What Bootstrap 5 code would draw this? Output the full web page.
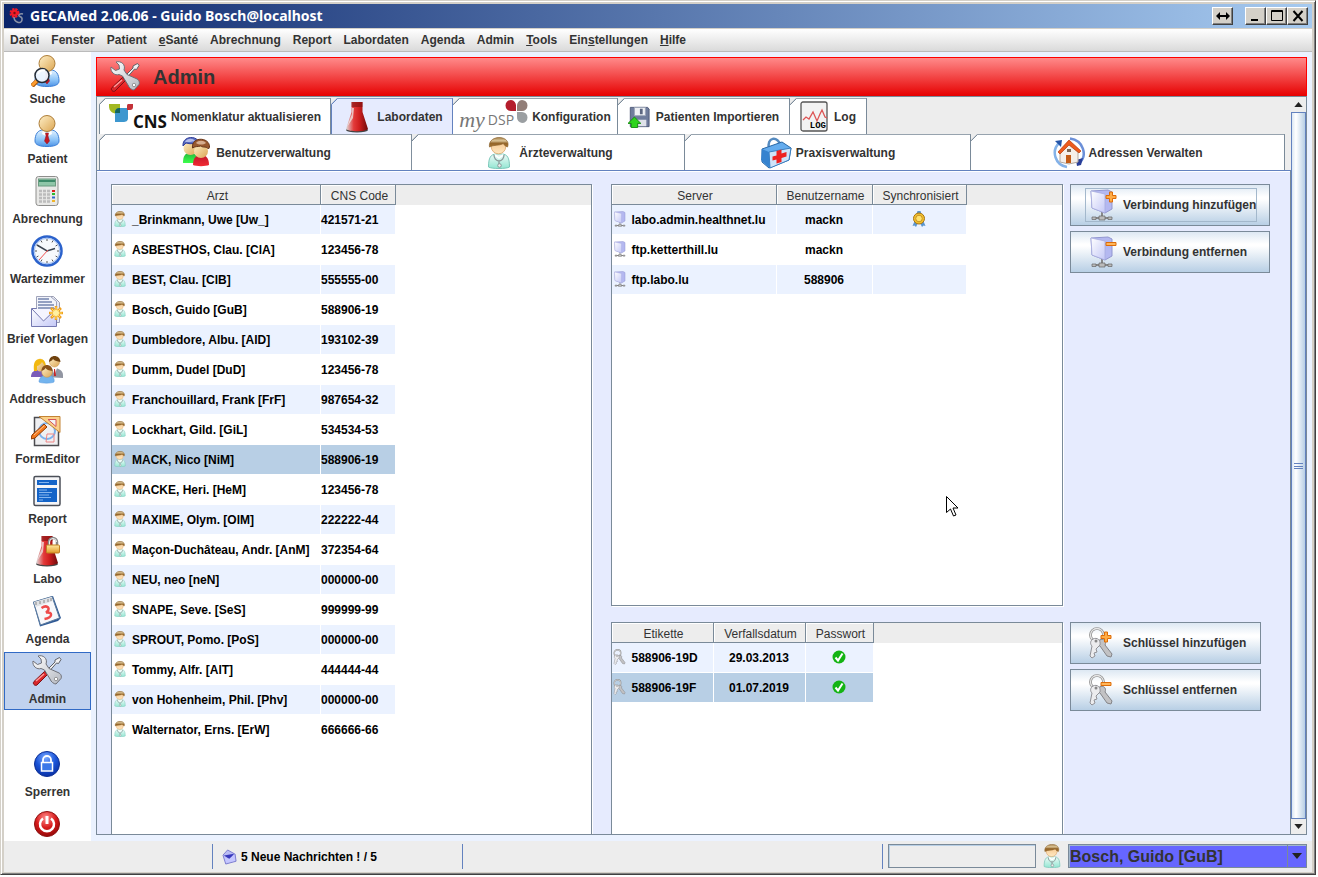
<!DOCTYPE html>
<html lang="de">
<head>
<meta charset="utf-8">
<meta name="viewport" content="width=device-width, initial-scale=1">
<title>GECAMed 2.06.06 - Guido Bosch@localhost</title>
<link href="https://cdn.jsdelivr.net/npm/bootstrap@5.3.0/dist/css/bootstrap.min.css" rel="stylesheet">
<style>
:root { --line:#7a8a99; --blue:#6382bf; --pane:#e6ebfe; --chrome:#d4d0c8; --face:#ededed; --stripe:#ebf2ff; --pick:#b8cfe5; }
body { font-family:"Liberation Sans",Arial,sans-serif; font-size:12px; font-weight:700; line-height:16px; color:#333; background:#fff; }
.btn { font-size:12px; line-height:16px; --bs-btn-font-weight:700; }

/* window frame, title bar, menu */
.window { height:calc(100vh - 2px); margin-right:2px; padding:3px 3px 2px; background:var(--chrome); border:1px solid; border-color:var(--chrome) #404040 #404040 var(--chrome); box-shadow:inset 1px 1px #fff, inset -1px -1px #808080; }
.titlebar { height:24px; padding:0 4px 0 5px; color:#fff; background:linear-gradient(90deg,#0a246a,#a6caf0); font:700 14px/24px "Noto Sans",sans-serif; }
.capbtn { width:21px; height:18px; padding:0; border:1px solid; border-color:#fff #404040 #404040 #fff; border-radius:0; background:var(--chrome); line-height:0; box-shadow:inset -1px -1px #808080; }
.capbtn svg { width:16px; height:14px; }
.menubar { height:24px; margin-top:1px; padding:0 6px; gap:12px; background:linear-gradient(#fff,#dadada); border-bottom:1px solid #bbb; }
.menubar a, .side a { color:#333; text-decoration:none; }

/* module bar on the left */
.workspace { background:var(--stripe); }
.side { width:87px; background:#fff; flex:none; }
.side a { height:58px; margin-bottom:2px; padding-top:2px; border:1px solid transparent; flex:none; text-align:center; white-space:nowrap; }
.side a.active { background:#c1d2ee; border-color:#316ac5; }
.side svg { width:32px; height:32px; display:block; margin:0 0 4px 26px; }
.spacer { height:33px; flex:none; }

/* module area */
.content-frame { margin:5px 5px 6px; }
.banner { height:39px; padding-left:12px; gap:12px; border:solid red; border-width:1px 1px 0; background:linear-gradient(#ff8a8a,#e60000); }
.banner h1 { font-size:20px; line-height:24px; font-weight:700; margin:0; }
.banner svg { width:32px; height:32px; }
.scroller { border:1px solid var(--line); background:var(--face); }
.tabrow { padding:1px 0 0 2px; }
.tabrow.second { padding:0 6px 0 2px; }
.tab-btn { height:36px; padding:0; gap:4px; color:#333; border:1px solid var(--line); border-bottom:0; border-left-width:0; background:linear-gradient(135deg,var(--line) 5px,#fff 5px) border-box; clip-path:polygon(6px 0,100% 0,100% 100%,0 100%,0 6px); white-space:nowrap; }
.tab-btn:first-child { border-left-width:1px; }
.tab-btn.chosen { border-color:var(--blue); background:linear-gradient(135deg,var(--blue) 5px,var(--pane) 5px) border-box; border-left-width:1px; }
.w-a { width:232px; } .w-b { width:122px; } .w-c { width:165px; } .w-d { width:172px; gap:6px; } .w-e { width:77px; gap:6px; }
.g-a { flex:312 1 0; } .g-b { flex:273 1 0; } .g-c { flex:286 1 0; } .g-d { flex:314 1 0; }
.i32 { width:32px; height:32px; flex:none; }
.brand-cns { height:26px; }
.cnsword { font:700 17px/20px "Open Sans",sans-serif; color:#111; margin-top:8px; }
.brand-dsp { height:34px; }
.brand-dsp svg { margin-left:-9px; }
.myword { font:italic 400 22px/22px "Liberation Serif",serif; color:#777; margin:9px 3px 0 0; }
.dspword { font:400 14px/18px "Open Sans",sans-serif; color:#777; margin-top:11px; }
.logword { position:absolute; right:2px; bottom:1px; font:700 9px/9px "Liberation Mono",monospace; color:#000; }

/* tab content: doctors left, connections and keys right */
.tabpane { border-top:1px solid var(--blue); border-right:1px solid var(--line); box-shadow:inset 0 1px #fff; background:var(--pane); display:grid; grid-template-columns:480fr 471fr 207px; grid-template-rows:minmax(0,422fr) minmax(0,212fr); row-gap:16px; padding:13px 20px 0 14px; min-height:0; }
.listing { border:1px solid var(--line); background:linear-gradient(var(--face) 20px,#fff 20px); overflow:hidden; min-height:0; min-width:0; margin-left:19px; box-shadow:1px 1px #fff; }
.listing.doctors { grid-row:span 2; margin-left:0; }
.listing.cut { border-bottom:0; }
.grid-table { border-collapse:separate; border-spacing:0; table-layout:fixed; color:#000; white-space:nowrap; }
.grid-table th { height:20px; padding:2px 0 0 3px; font-weight:400; text-align:center; line-height:16px; color:#333; background:var(--face); border:solid var(--line); border-width:0 1px 1px 0; box-shadow:inset 1px 1px #fff; }
.grid-table td { height:30px; padding:0; border:solid #fff; border-width:0 1px 1px 0; vertical-align:middle; }
.grid-table td svg { width:16px; height:16px; vertical-align:-3px; margin-right:4px; }
.grid-table td.text-center svg { margin:0; }
.grid-table tbody tr:nth-child(odd) td { background:var(--stripe); }
.grid-table tbody tr.picked td { background:var(--pick); }
.docs { width:284px; } .servers { width:355px; } .keyring { width:262px; }
.k209 { width:209px; } .k75 { width:75px; } .k165 { width:165px; } .k96 { width:96px; } .k94 { width:94px; } .k102 { width:102px; } .k92 { width:92px; } .k68 { width:68px; }
.actions { gap:5px; margin-left:7px; }
.keyacts { margin-right:9px; }
.metal { height:42px; padding:0 0 0 15px; border:1px solid var(--line); background:linear-gradient(#dde8f3,#fff 30%,#fff 35%,#b8cfe5); color:#333; white-space:nowrap; }
.metal .inner { gap:5px; line-height:32px; }
.metal .focused { outline:1px solid #a3b8cc; }

/* scroll bar */
.sbar { width:15px; flex:none; background:#fff; }
.sbar button { height:15px; padding:0; border:0; background:var(--face); line-height:0; }
.sbar svg { width:9px; height:5px; }
.thumb { border:1px solid var(--blue); background:linear-gradient(90deg,#dbe7f3,#fff 30%,#b8cfe5); }
.grip { width:9px; height:6px; border:solid var(--blue); border-width:1px 0; }
.grip::after { content:""; display:block; height:1px; margin-top:2px; background:var(--blue); }

/* status line */
.status { height:31px; padding:3px 5px 3px 0; background:var(--face); color:#000; }
.status .cell { height:25px; border-right:1px solid var(--blue); }
.c1 { width:209px; } .c2 { width:250px; padding-left:9px; gap:4px; }
.field { width:148px; height:24px; margin-left:5px; border:1px solid var(--line); border-radius:0; background:var(--face); box-shadow:inset 1px 1px var(--pick); padding:0 3px; }
.docicon { width:26px; height:24px; margin:0 3px; }
.userpick { width:239px; }
.userpick select { width:100%; height:24px; padding:2px 20px 0 1px; border:1px solid var(--line); border-radius:0; appearance:none; background:#66f; color:#333; font:700 16px/20px "Liberation Sans",Arial,sans-serif; box-shadow:inset 1px 1px #a3b8cc; }
.userpick svg { position:absolute; right:5px; top:9px; width:10px; height:6px; pointer-events:none; }
.userpick::after { content:""; position:absolute; right:19px; top:1px; bottom:1px; width:1px; background:var(--line); }
.pointer { position:absolute; left:945px; top:495px; width:14px; height:22px; pointer-events:none; }
</style>
</head>
<body>
<svg width="0" height="0" class="position-absolute" aria-hidden="true">
<defs>
<linearGradient id="gSkin" x1="0" y1="0" x2="1" y2="1"><stop offset="0" stop-color="#fff0c8"/><stop offset="1" stop-color="#dba552"/></linearGradient>
<linearGradient id="gFace" x1="0" y1="0" x2="0" y2="1"><stop offset="0" stop-color="#f4c083"/><stop offset="1" stop-color="#ffe9c4"/></linearGradient>
<linearGradient id="gShirt" x1="0" y1="0" x2="0" y2="1"><stop offset="0" stop-color="#e4f3ff"/><stop offset=".6" stop-color="#8cc4f8"/><stop offset="1" stop-color="#4d93e6"/></linearGradient>
<linearGradient id="gMint" x1="0" y1="0" x2="0" y2="1"><stop offset="0" stop-color="#effbf8"/><stop offset="1" stop-color="#93e6d2"/></linearGradient>
<linearGradient id="gGreen" x1="0" y1="0" x2="0" y2="1"><stop offset="0" stop-color="#24b83c"/><stop offset="1" stop-color="#3dff4c"/></linearGradient>
<linearGradient id="gRed" x1="0" y1="0" x2="0" y2="1"><stop offset="0" stop-color="#c0182a"/><stop offset="1" stop-color="#f22a32"/></linearGradient>
<linearGradient id="gFlask" x1="0" y1="0" x2="1" y2="0"><stop offset="0" stop-color="#ddd"/><stop offset=".35" stop-color="#e33a3a"/><stop offset=".6" stop-color="#d01f1f"/><stop offset="1" stop-color="#6e0b0b"/></linearGradient>
<linearGradient id="gSteel" x1="0" y1="0" x2="1" y2="1"><stop offset="0" stop-color="#fff"/><stop offset="1" stop-color="#b4b8c0"/></linearGradient>
<linearGradient id="gLav" x1="0" y1="0" x2="1" y2="1"><stop offset="0" stop-color="#fff"/><stop offset="1" stop-color="#c4c8f6"/></linearGradient>
<linearGradient id="gGold" x1="0" y1="0" x2="0" y2="1"><stop offset="0" stop-color="#ffe9a0"/><stop offset="1" stop-color="#e09a28"/></linearGradient>
<linearGradient id="gHair" x1="0" y1="0" x2="0" y2="1"><stop offset="0" stop-color="#a8854e"/><stop offset=".35" stop-color="#dcc598"/><stop offset=".6" stop-color="#94662a"/><stop offset="1" stop-color="#a8732e"/></linearGradient>
<radialGradient id="gBall" cx=".45" cy=".25" r=".8"><stop offset="0" stop-color="#79a8ff"/><stop offset=".5" stop-color="#1b55d8"/><stop offset="1" stop-color="#062a9c"/></radialGradient>
<radialGradient id="gBallR" cx=".45" cy=".25" r=".8"><stop offset="0" stop-color="#ff8b8b"/><stop offset=".5" stop-color="#d81b1b"/><stop offset="1" stop-color="#8c0606"/></radialGradient>
</defs>
<symbol id="person" viewBox="0 0 32 32"><path d="M4 26c0-7 3-11 8-11h8c5 0 8 4 8 11 0 4-5 5.500-12 5.500S4 30 4 26z" fill="url(#gShirt)" stroke="#3d7fd6"/><path d="M12 15l4 4 4-4 1 4-4 2h-2l-4-2z" fill="#fff"/><path d="M14.500 18h3l-.5 3 1.500 5-2.500 3-2.500-3 1.500-5z" fill="#c41824" stroke="#8b1a20" stroke-width=".5"/><circle cx="16" cy="8.500" r="8" fill="url(#gSkin)" stroke="#ad7d38"/></symbol>
<symbol id="search" viewBox="0 0 32 32"><use href="#person"/><path d="M1 31l6-6" stroke="#a85810" stroke-width="4.500"/><path d="M1 30.500l6-6" stroke="#ff9d2e" stroke-width="3"/><circle cx="11" cy="20.500" r="7" fill="#eef5ff" fill-opacity=".95" stroke="#222b36" stroke-width="1.500"/><path d="M7 19c1-3 4-4.500 7-3.500" fill="none" stroke="#fff" stroke-width="2"/></symbol>
<symbol id="calc" viewBox="0 0 32 32"><rect x="5" y="1.500" width="22" height="29" rx="2.500" fill="#e9e9e7" stroke="#8e8e8c"/><rect x="7.500" y="4" width="17" height="7" fill="#8fc6a8" stroke="#6b9a80"/><path d="M8 5h16v2H8z" fill="#3d8a69"/><g stroke="#bcbcbc" stroke-width="2.500" stroke-dasharray="3 1"><path d="M8 16h11M8 19.500h11M8 23h11M8 26.500h11"/></g><path d="M21 15h3v2h-3z" fill="#e01c1c"/><path d="M21 18h3v2h-3z" fill="#2eb82e"/><path d="M21 21.500h3v2h-3z" fill="#36c"/><path d="M21 25h3v2h-3z" fill="#f0b428"/></symbol>
<symbol id="clock" viewBox="0 0 32 32"><circle cx="16" cy="16" r="14.500" fill="#f7f9fc" stroke="#2b62cc" stroke-width="2.500"/><circle cx="16" cy="16" r="12.700" fill="none" stroke="#9dbcf0"/><path d="M16 4v2M16 26v2M4 16h2M26 16h2M10 5.600l1 1.800M22 5.600l-1 1.800M5.600 10l1.800 1M26.400 10l-1.800 1M5.600 22l1.800-1M26.400 22l-1.800-1M22 26.400l-1-1.800M10 26.400l1-1.800" stroke="#555"/><path d="M6 10l10 6 8-2.500" fill="none" stroke="#3b4450" stroke-width="1.500"/><path d="M17 15L8 25" stroke="#f05050"/></symbol>
<symbol id="letter" viewBox="0 0 32 32"><path d="M7.500 1.500h15l6 6v20h-21z" fill="#e6e9f4" stroke="#9a9db2"/><path d="M5.500 1.500h14l6 5v18h-20z" fill="#f2f4fb" stroke="#a0a4ba"/><path d="M7 4h11M7 7h14M7 10h16M7 13h16" stroke="#7484ae" stroke-width="1.500"/><path d="M.5 13.500h5l6 6 2 1 10-7h2v18H.5z" fill="url(#gLav)" stroke="#7478b0"/><path d="M1 14l11.500 12L25 14" fill="#f4f4ff" stroke="#7478b0"/><g stroke="#f0a020" stroke-width="2.500"><path d="M25 11v14M18 18h14M20 13l10 10M30 13L20 23"/></g><g stroke="#ffe060"><path d="M25 12v12M19 18h12M21 14l8 8M29 14l-8 8"/></g><circle cx="25" cy="18" r="3" fill="#fff0a0"/></symbol>
<symbol id="contacts" viewBox="0 0 32 32"><path d="M15 22c0-6 3-9 8-9s9 3 9 7v3z" fill="#9296a2"/><path d="M21 13l2.500 7 2.500-7z" fill="#fff"/><path d="M23 14h1l1 7h-2z" fill="#c22"/><circle cx="23.500" cy="7" r="5" fill="url(#gSkin)" stroke="#c59248" stroke-width=".5"/><path d="M18 7c0-8 11-8 11.500 0-3-1-6-1-7.500-3-1 2-3 2-4 3z" fill="#70420f"/><path d="M0 22c0-5 3-7 8-7s7 3 7 7z" fill="#7a5cb8"/><ellipse cx="9" cy="10" rx="4.800" ry="6.500" fill="url(#gSkin)"/><path d="M3 16C2 8 4 4 9 4c4 0 6 3 6 9l-1 2c0-4-1-6-3-8-1 2-4 4-5 4v5z" fill="#f2b80f"/><path d="M8 27c0-4 3-7 8-7s8 3 7 7c-2 1.500-13 1.500-15 0z" fill="#73b4ee" stroke="#5797dd" stroke-width=".5"/><circle cx="16" cy="17" r="5.300" fill="url(#gSkin)" stroke="#c59248" stroke-width=".5"/><path d="M10.500 16c0-8 11-8 11 0-4-.5-6-1.500-7-3-1 2-2.500 2.500-4 3z" fill="#8a5218"/></symbol>
<symbol id="formed" viewBox="0 0 32 32"><path d="M3.500 2.500h24v28h-24z" fill="#f0f0f2" stroke="#4c4c50" stroke-width="1.500"/><circle cx="16" cy="16" r="8" fill="none" stroke="#7db2ee" stroke-width="2"/><path d="M16 19h7v8h-8z" fill="none" stroke="#ee8585"/><path d="M8 1.500h21v16z" fill="#fbd089" stroke="#c48434"/><path d="M17 4.500h8v7z" fill="#f3f3f3" stroke="#d4515c"/><path d="M1 20l12-11 3 3L4 23l-4 1z" fill="#f47a20" stroke="#8d3c07"/><path d="M3 20L13.500 10.500" stroke="#ffc38d"/></symbol>
<symbol id="report" viewBox="0 0 32 32"><rect x="3" y="1.500" width="26" height="29" rx="1.500" fill="#f5f5f7" stroke="#4b4f58" stroke-width="1.500"/><path d="M6 5h20v5H6zM6 13h20v14H6z" fill="#1464c8"/><path d="M8 7.500h10M8 15h8M8 17.500h13M8 20h10M8 22.500h12M8 25h4" stroke="#85b5ee"/></symbol>
<symbol id="flask" viewBox="0 0 32 32"><ellipse cx="16" cy="29" rx="11" ry="2.500" fill="#444"/><path d="M10.500 1h11v10l5.500 17c-3 3-19 3-22 0l5.500-17z" fill="url(#gFlask)"/><path d="M10.500 1h11v5h-11z" fill="#7d1111" fill-opacity=".6"/><path d="M6 26l5-13v-6l2 0-1 10z" fill="#eee" fill-opacity=".7"/></symbol>
<symbol id="labo" viewBox="0 0 32 32"><use href="#flask"/><path d="M18 13V7a4 4 0 0 1 8 0v6" fill="none" stroke="#888" stroke-width="2.500"/><path d="M18.500 12V7a3.500 3.500 0 0 1 7 0" fill="none" stroke="#f2f2f2"/><rect x="15.500" y="10" width="13" height="8" rx="1" fill="url(#gGold)" stroke="#c28020"/></symbol>
<symbol id="agenda" viewBox="0 0 32 32"><path d="M9 31.500l18-5.500 3-3L22 1 2 7z" fill="#2f5a96"/><path d="M2.500 7L21 1.500l7.500 21.500-19 7z" fill="#f7f8fb" stroke="#5c7b9e"/><path d="M3 7L20.500 2l1.500 4L4.500 12z" fill="#dfe1e5"/><path d="M5 7v3M9 6v3M13 5v3M17 4v3M20 3v3" stroke="#888"/><path d="M10.500 13c6-4 10 1 4.500 4.500 7-1 7 5-1.500 6.500" fill="none" stroke="#ee4b4b" stroke-width="2.500"/></symbol>
<symbol id="tools" viewBox="0 0 32 32"><path d="M28.500 2.500l1.500 2-2.500 4-2-.5L15 20l-2-2L24 7V5z" fill="#f1f1f3" stroke="#5e6066"/><path d="M13.500 16.500l3 3L6 30c-2 1.500-5-1.500-3-3.500z" fill="#d8262a" stroke="#7c1014"/><path d="M5 26l8-7" stroke="#ff9a9a" stroke-width="1.500"/><path d="M7 1c5-1.500 10 2.500 8 8l3 4.500 9 4c3 1 4 4 3 6l-5 5.500c-2 0-5-2-6-5l-5.500-9-3.500-1.500C6 15 1 11 2 6l4.500 3.500 4-1.500-.5-4z" fill="url(#gSteel)" stroke="#6e7078"/><circle cx="25" cy="24" r="1.700" fill="#fff" stroke="#777" stroke-width=".7"/></symbol>
<symbol id="lock" viewBox="0 0 32 32"><circle cx="16" cy="16" r="12.500" fill="url(#gBall)" stroke="#0c2f96"/><path d="M12 15v-3a4 4 0 0 1 8 0v3" fill="none" stroke="#fff" stroke-width="1.800"/><rect x="10.500" y="14.500" width="11" height="8.500" fill="#3c78e8" stroke="#fff" stroke-width="1.500"/></symbol>
<symbol id="power" viewBox="0 0 32 32"><circle cx="16" cy="16" r="12.500" fill="url(#gBallR)" stroke="#8f1010"/><path d="M12 10.500a7 7 0 1 0 8 0" fill="none" stroke="#fff" stroke-width="2.500"/><path d="M16 8v8" stroke="#fff" stroke-width="3"/></symbol>
<symbol id="doctor" viewBox="0 0 32 32"><path d="M5.500 30c0-9 2-13 8-13h5c6 0 8 4 8 13-3 2-18 2-21 0z" fill="url(#gMint)" stroke="#7cc8ba"/><path d="M12 17l4 3 4-3v2l-4 3-4-3z" fill="#fff"/><path d="M11 18c0 3 2 6 5 6s5-3 5-6M16 24v3" fill="none" stroke="#8b9a9a" stroke-width="1.300"/><circle cx="16.500" cy="28.500" r="1.800" fill="#eee" stroke="#899"/><circle cx="15.500" cy="9.500" r="7.300" fill="url(#gFace)" stroke="#dba468" stroke-width=".8"/><path d="M6.500 10C4.500-2 26-2.500 25 8l-.5 2C22 9 21 8 20.500 6.500 16 9 10.500 7.500 6.500 10z" fill="url(#gHair)" stroke="#8c6430" stroke-width=".7"/></symbol>
<symbol id="users" viewBox="0 0 32 32"><path d="M3 26c0-7 2-10 7-10s9 3 9 10z" fill="url(#gGreen)"/><circle cx="10.500" cy="11" r="7" fill="url(#gSkin)"/><path d="M3 9C2-2 19-2 19 7c-4-2-7 1-13-1z" fill="#5a6cc0" stroke="#33409a"/><path d="M5 5c2-4 8-4 10-1-3 1-7 1-10 1z" fill="#c8d0f4" fill-opacity=".8"/><path d="M13 28c0-7 3-10 8-10s8 3 8 10c-3 1.500-13 1.500-16 0z" fill="url(#gRed)"/><circle cx="21" cy="14" r="7" fill="url(#gSkin)"/><path d="M12.500 11C11-1 30 0 29.500 10l-1 2c-2-3-5-1-8-3-3 1-5 0-8 2z" fill="#98582e" stroke="#68361a"/><path d="M16 6c2-3 8-3 10 0-3 2-7 2-10 0z" fill="#e6c3a8" fill-opacity=".8"/></symbol>
<symbol id="medbag" viewBox="0 0 32 32"><path d="M9 12C6 0 18-2 21 9" fill="none" stroke="#568bc0" stroke-width="2.500"/><path d="M2 12L22 5l9 6-2 12-20 8-7-6z" fill="#64acee" stroke="#2867a6"/><path d="M9 15l22-4-2 12-19 8z" fill="#cfe4fa" stroke="#3a7fc0"/><path d="M2 12l7 3 1 16-9-8z" fill="#3683cf"/><path d="M16.500 14l5-1.500v4l5-1.500v4.500l-5 1.500v4l-5 1.500v-4l-4 1V19.500l4-1z" fill="#ee2222"/></symbol>
<symbol id="house" viewBox="0 0 32 32"><path d="M6 6C-2 14 2 28 14 30" fill="none" stroke="#84b2e8" stroke-width="2.500"/><path d="M17 1.500c14 2 17 17 10 24" fill="none" stroke="#6c90d8" stroke-width="2.500"/><path d="M2 4l7-1-1 7z" fill="#2455a8"/><path d="M30 21l-7 2 1 6 4-1z" fill="#2a3f98"/><path d="M7 15l9-8 9 8v10l-9 2-9-2z" fill="#f5efe9" stroke="#b1a79d"/><path d="M16 3l12 11-2 2-10-8L7 17l-2-2z" fill="#ee5a1c" stroke="#b53b08" stroke-width=".7"/><path d="M13 18h5v8h-5z" fill="#c45c17"/><path d="M14 12h4v3h-4z" fill="#7d6654"/></symbol>
<symbol id="disk" viewBox="0 0 24 24"><path d="M2.500 1.500h19l1.500 2v19H2.500z" fill="#6f7c9c" stroke="#4b5676"/><path d="M7 1.500h12v9H7z" fill="#eef0f4" stroke="#9aa3b6"/><path d="M13 3h3v6h-3z" fill="#5c6680"/><path d="M7 15h13v7H7z" fill="#dfe2ea"/><path d="M7 12l7 7h-3.500v4.500h-7V19H0z" fill="#2ed41c" stroke="#128a0a"/></symbol>
<symbol id="logpic" viewBox="0 0 28 31"><rect x="1" y="1" width="26" height="29" rx="2" fill="#f2f2f2" stroke="#555" stroke-width="1.300"/><path d="M3 19l3-3 3 2 4-7 4 9 3-7 2-4 3 7 2 1" fill="none" stroke="#dd5555" stroke-width="1.300"/></symbol>
<symbol id="cnslogo" viewBox="0 0 24 18"><path d="M0 0h11v9c-6 2-11-1-11-7z" fill="#a2b822"/><path d="M6 9c0-4 2-5 6-5h7v10c0 3-2 4-5 4H6z" fill="#3d97cf"/><path d="M6 9c0-4 2-5 5-5v5z" fill="#12655f"/><path d="M18 2c0-2 1-2 2-2h4v3c0 2-1 3-3 3h-3z" fill="#c33239"/></symbol>
<symbol id="dsplogo" viewBox="0 0 23 23"><path d="M6 0a5.500 5.500 0 1 0 0 11h5V6A5.500 5.500 0 0 0 6 0z" fill="#b41d2c"/><path d="M17 0a5.500 5.500 0 1 1 0 11h-5V6a5.500 5.500 0 0 1 5-6z" fill="#927e78"/><path d="M17 23a5.500 5.500 0 1 0 0-11h-5v5a5.500 5.500 0 0 0 5 6z" fill="#9b9fa2"/></symbol>
<symbol id="server" viewBox="0 0 32 32"><path d="M16 22v6M7 29h18" stroke="#888" stroke-width="2"/><path d="M13 27h6v4h-6zM6 28h4v2.500H6zM22 28h4v2.500h-4z" fill="#bbb" stroke="#666" stroke-width=".7"/><path d="M5 2l17-1 4 2v17l-7 4-13-5z" fill="#b4b8f0" stroke="#9297d0"/><path d="M5 2l14 3v19L6 19z" fill="url(#gLav)" stroke="#a5a9dc" stroke-width=".7"/></symbol>
<symbol id="keys" viewBox="0 0 32 32"><circle cx="11" cy="8" r="6.500" fill="none" stroke="#888" stroke-width="2.700"/><circle cx="11" cy="8" r="6.500" fill="none" stroke="#e6e6e6" stroke-width="1.300"/><path d="M14 13c3-2 7 1 5 5l7 9-1 3-4-1-7-10c-3-1-3-4 0-6z" fill="#c2c2c4" stroke="#848488"/><path d="M7 12c4-2 8 1 7 6l-4 4 1 3-3 1 1 3-3 2-2-2 2-10c-2-2-2-5 1-7z" fill="#ececee" stroke="#919196"/><circle cx="10" cy="14" r="1.500" fill="#888"/></symbol>
<symbol id="plusmark" viewBox="0 0 12 12"><path d="M4.500 1h3v3.500H11v3H7.500V11h-3V7.500H1v-3h3.500z" fill="#ffac45" stroke="#dd6c08"/></symbol>
<symbol id="minusmark" viewBox="0 0 12 12"><path d="M1 4.500h10v3H1z" fill="#ffb65a" stroke="#dd6c08"/></symbol>
<symbol id="srvadd" viewBox="0 0 32 32"><use href="#server"/><use href="#plusmark" x="19" y="2" width="12" height="12"/></symbol>
<symbol id="srvdel" viewBox="0 0 32 32"><use href="#server"/><use href="#minusmark" x="19" y="2" width="12" height="12"/></symbol>
<symbol id="keyadd" viewBox="0 0 32 32"><use href="#keys"/><use href="#plusmark" x="14" y="4" width="12" height="12"/></symbol>
<symbol id="keydel" viewBox="0 0 32 32"><use href="#keys"/><use href="#minusmark" x="14" y="4" width="12" height="12"/></symbol>
<symbol id="medal" viewBox="0 0 16 16"><path d="M4 9l-2.500 6 2-.5 1.500 1.500 2-4M12 9l2.500 6-2-.5-1.500 1.500-2-4M5.500 3l1-3h3l1 3z" fill="#5b95ce"/><circle cx="8" cy="7.500" r="5.500" fill="#f2c22e" stroke="#a87414"/><circle cx="8" cy="7.500" r="3.300" fill="#ffe26c" stroke="#c99122"/></symbol>
<symbol id="okmark" viewBox="0 0 16 16"><circle cx="8" cy="8" r="6.500" fill="#14b414"/><path d="M4.500 8.500l2.500 3 4.500-7" fill="none" stroke="#fff" stroke-width="2"/></symbol>
<symbol id="mail" viewBox="0 0 16 16"><path d="M1 6l5-5.500 8 4.500 1 7.500L4 15.500z" fill="#b9bbf4" stroke="#7a7ace"/><path d="M2 6.500L13 4.500 8 10z" fill="#3838bc"/><path d="M2.500 8l5 2L13 5.500l1 6.500-9.500 2.500z" fill="#c5c6ff"/></symbol>
<symbol id="arrdn" viewBox="0 0 10 6"><path d="M0 0h10L5 6z" fill="#222"/></symbol>
<symbol id="arrup" viewBox="0 0 10 6"><path d="M0 6h10L5 0z" fill="#222"/></symbol>
</svg>

<div class="window d-flex flex-column">
  <header class="titlebar d-flex align-items-center">
    <svg width="17" height="16" viewBox="0 0 17 16" class="me-1" aria-hidden="true"><circle cx="5.500" cy="5" r="3.500" fill="none" stroke="#f01b28" stroke-width="3" stroke-dasharray="2 .8"/><circle cx="5.500" cy="5" r="3.500" fill="#f01b28"/><circle cx="5.500" cy="5" r="1.200" fill="#711"/><path d="M5 9c0 5 7 8 8 3 1-4-4-3-3-5s4-1 4-1" fill="none" stroke="#8b93a8" stroke-width="1.500"/></svg>
    <span class="flex-grow-1">GECAMed 2.06.06 - Guido Bosch@localhost</span>
    <button class="btn capbtn me-2" aria-label="Breite anpassen"><svg viewBox="0 0 16 14"><path d="M1 7l4-4v3h6V3l4 4-4 4V8H5v3z" fill="#000"/></svg></button>
    <button class="btn capbtn ms-1" aria-label="Minimieren"><svg viewBox="0 0 16 14"><path d="M3 10h7v2H3z" fill="#000"/></svg></button>
    <button class="btn capbtn" aria-label="Maximieren"><svg viewBox="0 0 16 14"><path d="M2.500 1.500h11v10h-11zM2 2.500h12" fill="none" stroke="#000"/></svg></button>
    <button class="btn capbtn" aria-label="Schließen"><svg viewBox="0 0 16 14"><path d="M3.500 2l9 10M12.500 2l-9 10" stroke="#000" stroke-width="2"/></svg></button>
  </header>
  <nav class="menubar d-flex align-items-center">
    <a href="#">Datei</a><a href="#">Fenster</a><a href="#">Patient</a><a href="#"><u>e</u>Santé</a><a href="#">Abrechnung</a><a href="#">Report</a><a href="#">Labordaten</a><a href="#">Agenda</a><a href="#">Admin</a><a href="#"><u>T</u>ools</a><a href="#">Ein<u>s</u>tellungen</a><a href="#"><u>H</u>ilfe</a>
  </nav>

  <div class="workspace d-flex flex-grow-1 overflow-hidden">
    <nav class="side d-flex flex-column overflow-hidden">
      <a href="#"><svg><use href="#search"/></svg>Suche</a>
      <a href="#"><svg><use href="#person"/></svg>Patient</a>
      <a href="#"><svg><use href="#calc"/></svg>Abrechnung</a>
      <a href="#"><svg><use href="#clock"/></svg>Wartezimmer</a>
      <a href="#"><svg><use href="#letter"/></svg>Brief Vorlagen</a>
      <a href="#"><svg><use href="#contacts"/></svg>Addressbuch</a>
      <a href="#"><svg><use href="#formed"/></svg>FormEditor</a>
      <a href="#"><svg><use href="#report"/></svg>Report</a>
      <a href="#"><svg><use href="#labo"/></svg>Labo</a>
      <a href="#"><svg><use href="#agenda"/></svg>Agenda</a>
      <a href="#" class="active"><svg><use href="#tools"/></svg>Admin</a>
      <div class="spacer"></div>
      <a href="#"><svg><use href="#lock"/></svg>Sperren</a>
      <a href="#" aria-label="Beenden"><svg><use href="#power"/></svg></a>
    </nav>

    <main class="content-frame d-flex flex-column flex-grow-1 overflow-hidden">
      <div class="banner d-flex align-items-center flex-shrink-0"><svg><use href="#tools"/></svg><h1>Admin</h1></div>
      <div class="scroller d-flex flex-grow-1 overflow-hidden">
        <div class="d-flex flex-column flex-grow-1 overflow-hidden">
          <div class="tabrow d-flex flex-shrink-0" role="tablist">
            <button class="btn rounded-0 tab-btn w-a d-flex align-items-center justify-content-center" role="tab"><span class="brand-cns d-flex"><svg width="24" height="18"><use href="#cnslogo"/></svg><span class="cnsword">CNS</span></span>Nomenklatur aktualisieren</button>
            <button class="btn rounded-0 tab-btn chosen w-b d-flex align-items-center justify-content-center" role="tab" aria-selected="true"><svg class="i32"><use href="#flask"/></svg>Labordaten</button>
            <button class="btn rounded-0 tab-btn w-c d-flex align-items-center justify-content-center" role="tab"><span class="brand-dsp d-flex"><span class="myword">my</span><span class="dspword">DSP</span><svg width="23" height="23"><use href="#dsplogo"/></svg></span>Konfiguration</button>
            <button class="btn rounded-0 tab-btn w-d d-flex align-items-center justify-content-center" role="tab"><svg width="22" height="22"><use href="#disk"/></svg>Patienten Importieren</button>
            <button class="btn rounded-0 tab-btn w-e d-flex align-items-center justify-content-center" role="tab"><span class="position-relative d-flex"><svg width="28" height="31"><use href="#logpic"/></svg><span class="logword">LOG</span></span>Log</button>
          </div>
          <div class="tabrow second d-flex flex-shrink-0" role="tablist">
            <button class="btn rounded-0 tab-btn g-a d-flex align-items-center justify-content-center" role="tab"><svg class="i32"><use href="#users"/></svg>Benutzerverwaltung</button>
            <button class="btn rounded-0 tab-btn g-b d-flex align-items-center justify-content-center" role="tab"><svg class="i32"><use href="#doctor"/></svg>Ärzteverwaltung</button>
            <button class="btn rounded-0 tab-btn g-c d-flex align-items-center justify-content-center" role="tab"><svg class="i32"><use href="#medbag"/></svg>Praxisverwaltung</button>
            <button class="btn rounded-0 tab-btn g-d d-flex align-items-center justify-content-center" role="tab"><svg class="i32"><use href="#house"/></svg>Adressen Verwalten</button>
          </div>
          <section class="tabpane flex-grow-1">
            <div class="listing doctors cut">
              <table class="grid-table docs">
                <colgroup><col class="k209"><col class="k75"></colgroup>
                <thead><tr><th>Arzt</th><th>CNS Code</th></tr></thead>
                <tbody>
                  <tr><td><svg><use href="#doctor"/></svg>_Brinkmann, Uwe [Uw_]</td><td>421571-21</td></tr>
                  <tr><td><svg><use href="#doctor"/></svg>ASBESTHOS, Clau. [ClA]</td><td>123456-78</td></tr>
                  <tr><td><svg><use href="#doctor"/></svg>BEST, Clau. [ClB]</td><td>555555-00</td></tr>
                  <tr><td><svg><use href="#doctor"/></svg>Bosch, Guido [GuB]</td><td>588906-19</td></tr>
                  <tr><td><svg><use href="#doctor"/></svg>Dumbledore, Albu. [AlD]</td><td>193102-39</td></tr>
                  <tr><td><svg><use href="#doctor"/></svg>Dumm, Dudel [DuD]</td><td>123456-78</td></tr>
                  <tr><td><svg><use href="#doctor"/></svg>Franchouillard, Frank [FrF]</td><td>987654-32</td></tr>
                  <tr><td><svg><use href="#doctor"/></svg>Lockhart, Gild. [GiL]</td><td>534534-53</td></tr>
                  <tr class="picked"><td><svg><use href="#doctor"/></svg>MACK, Nico [NiM]</td><td>588906-19</td></tr>
                  <tr><td><svg><use href="#doctor"/></svg>MACKE, Heri. [HeM]</td><td>123456-78</td></tr>
                  <tr><td><svg><use href="#doctor"/></svg>MAXIME, Olym. [OlM]</td><td>222222-44</td></tr>
                  <tr><td><svg><use href="#doctor"/></svg>Maçon-Duchâteau, Andr. [AnM]</td><td>372354-64</td></tr>
                  <tr><td><svg><use href="#doctor"/></svg>NEU, neo [neN]</td><td>000000-00</td></tr>
                  <tr><td><svg><use href="#doctor"/></svg>SNAPE, Seve. [SeS]</td><td>999999-99</td></tr>
                  <tr><td><svg><use href="#doctor"/></svg>SPROUT, Pomo. [PoS]</td><td>000000-00</td></tr>
                  <tr><td><svg><use href="#doctor"/></svg>Tommy, Alfr. [AlT]</td><td>444444-44</td></tr>
                  <tr><td><svg><use href="#doctor"/></svg>von Hohenheim, Phil. [Phv]</td><td>000000-00</td></tr>
                  <tr><td><svg><use href="#doctor"/></svg>Walternator, Erns. [ErW]</td><td>666666-66</td></tr>
                </tbody>
              </table>
            </div>
            <div class="listing">
              <table class="grid-table servers">
                <colgroup><col class="k165"><col class="k96"><col class="k94"></colgroup>
                <thead><tr><th>Server</th><th>Benutzername</th><th>Synchronisiert</th></tr></thead>
                <tbody>
                  <tr><td><svg><use href="#server"/></svg>labo.admin.healthnet.lu</td><td class="text-center">mackn</td><td class="text-center"><svg><use href="#medal"/></svg></td></tr>
                  <tr><td><svg><use href="#server"/></svg>ftp.ketterthill.lu</td><td class="text-center">mackn</td><td></td></tr>
                  <tr><td><svg><use href="#server"/></svg>ftp.labo.lu</td><td class="text-center">588906</td><td></td></tr>
                </tbody>
              </table>
            </div>
            <div class="actions d-flex flex-column">
              <button class="btn rounded-0 metal d-flex align-items-center"><span class="inner focused d-flex align-items-center"><svg class="i32"><use href="#srvadd"/></svg>Verbindung hinzufügen</span></button>
              <button class="btn rounded-0 metal d-flex align-items-center"><span class="inner d-flex align-items-center"><svg class="i32"><use href="#srvdel"/></svg>Verbindung entfernen</span></button>
            </div>
            <div class="listing cut">
              <table class="grid-table keyring">
                <colgroup><col class="k102"><col class="k92"><col class="k68"></colgroup>
                <thead><tr><th>Etikette</th><th>Verfallsdatum</th><th>Passwort</th></tr></thead>
                <tbody>
                  <tr><td><svg><use href="#keys"/></svg>588906-19D</td><td class="text-center">29.03.2013</td><td class="text-center"><svg><use href="#okmark"/></svg></td></tr>
                  <tr class="picked"><td><svg><use href="#keys"/></svg>588906-19F</td><td class="text-center">01.07.2019</td><td class="text-center"><svg><use href="#okmark"/></svg></td></tr>
                </tbody>
              </table>
            </div>
            <div class="actions keyacts d-flex flex-column">
              <button class="btn rounded-0 metal d-flex align-items-center"><span class="inner d-flex align-items-center"><svg class="i32"><use href="#keyadd"/></svg>Schlüssel hinzufügen</span></button>
              <button class="btn rounded-0 metal d-flex align-items-center"><span class="inner d-flex align-items-center"><svg class="i32"><use href="#keydel"/></svg>Schlüssel entfernen</span></button>
            </div>
          </section>
        </div>
        <div class="sbar d-flex flex-column">
          <button aria-label="Nach oben"><svg><use href="#arrup"/></svg></button>
          <div class="thumb flex-grow-1 d-flex align-items-center justify-content-center"><div class="grip"></div></div>
          <button aria-label="Nach unten"><svg><use href="#arrdn"/></svg></button>
        </div>
      </div>
    </main>
  </div>

  <footer class="status d-flex align-items-start flex-shrink-0">
    <div class="cell c1"></div>
    <div class="cell c2 d-flex align-items-center"><svg width="15" height="16"><use href="#mail"/></svg><span>5 Neue Nachrichten ! / 5</span></div>
    <div class="cell flex-grow-1"></div>
    <input class="field" type="text" aria-label="Suchfeld">
    <svg class="docicon"><use href="#doctor"/></svg>
    <div class="userpick position-relative"><select aria-label="Arzt auswählen"><option>Bosch, Guido [GuB]</option></select><svg><use href="#arrdn"/></svg></div>
  </footer>
</div>
<svg class="pointer" viewBox="0 0 14 22" aria-hidden="true"><path d="M1.500 1.500v16l4-3.500 3 7 2.500-1-3-7h5z" fill="#fff" stroke="#000"/></svg>
<script src="https://cdn.jsdelivr.net/npm/bootstrap@5.3.0/dist/js/bootstrap.bundle.min.js"></script>
</body>
</html>
